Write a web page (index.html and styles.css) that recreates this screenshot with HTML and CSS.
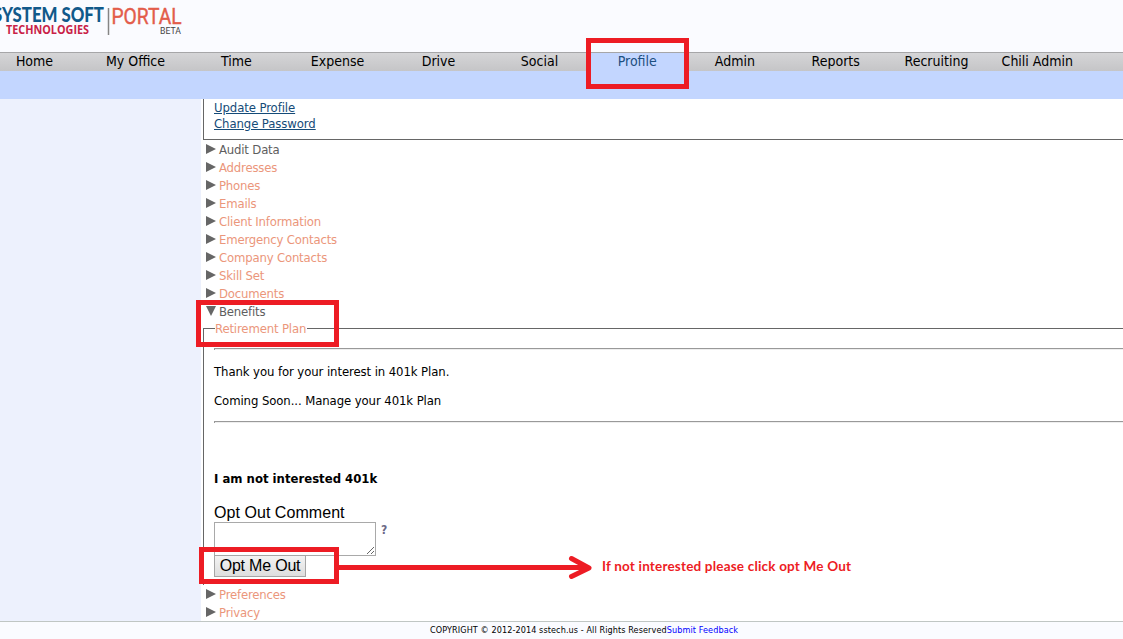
FILE: index.html
```html
<!DOCTYPE html>
<html lang="en">
<head>
<meta charset="utf-8">
<title>System Soft Portal - Profile</title>
<link rel="stylesheet" href="styles.css">
</head>
<body>
<header class="header">
  <svg class="logo" width="190" height="52" viewBox="0 0 190 52">
    <g class="logo-brand">
      <text x="-7" y="22.3" textLength="111" lengthAdjust="spacingAndGlyphs" class="brand-name">SYSTEM SOFT</text>
      <text x="6" y="34" textLength="83" lengthAdjust="spacingAndGlyphs" class="brand-sub">TECHNOLOGIES</text>
    </g>
    <path d="M108.500 8v27" stroke="#858585" stroke-width="1.5"/>
    <text x="111.500" y="23.800" textLength="70" lengthAdjust="spacingAndGlyphs" class="portal">PORTAL</text>
    <text x="160" y="33.800" textLength="21" lengthAdjust="spacingAndGlyphs" class="beta">BETA</text>
  </svg>
</header>
<nav class="nav">
  <a>Home</a><a>My Office</a><a>Time</a><a>Expense</a><a>Drive</a><a>Social</a><a class="active">Profile</a><a>Admin</a><a>Reports</a><a>Recruiting</a><a>Chili Admin</a>
</nav>
<div class="subnav"></div>
<div class="body">
  <aside class="sidebar"></aside>
  <main class="content">
    <section class="account">
      <a>Update Profile</a>
      <a>Change Password</a>
    </section>
    <ul class="sections">
      <li class="visited"><i class="tri"></i><span>Audit Data</span></li>
      <li><i class="tri"></i><span>Addresses</span></li>
      <li><i class="tri"></i><span>Phones</span></li>
      <li><i class="tri"></i><span>Emails</span></li>
      <li><i class="tri"></i><span>Client Information</span></li>
      <li><i class="tri"></i><span>Emergency Contacts</span></li>
      <li><i class="tri"></i><span>Company Contacts</span></li>
      <li><i class="tri"></i><span>Skill Set</span></li>
      <li><i class="tri"></i><span>Documents</span></li>
      <li class="visited"><i class="tri open"></i><span>Benefits</span></li>
    </ul>
    <section class="plan">
      <div class="legend"><span>Retirement Plan</span></div>
      <div class="plan-body">
        <hr>
        <p class="thanks">Thank you for your interest in 401k Plan.</p>
        <p class="soon">Coming Soon... Manage your 401k Plan</p>
        <hr>
        <h4>I am not interested 401k</h4>
        <label for="comment">Opt Out Comment</label>
        <div class="field"><textarea id="comment"></textarea><b class="help">?</b></div>
        <button>Opt Me Out</button>
      </div>
    </section>
    <ul class="sections">
      <li><i class="tri"></i><span>Preferences</span></li>
      <li><i class="tri"></i><span>Privacy</span></li>
    </ul>
  </main>
</div>
<footer class="footer"><span>COPYRIGHT © 2012-2014 sstech.us - All Rights Reserved</span><a>Submit Feedback</a></footer>
<svg class="notes" width="1123" height="639" viewBox="0 0 1123 639">
  <g fill="none" stroke="#ed1c24" stroke-width="5">
    <path d="M588.5 40.5h98v46h-98z"/>
    <path d="M198.500 302.500h138v42h-138z"/>
    <path d="M201.500 549.500h135v32h-135z"/>
    <path d="M339 567.500h248"/>
    <path d="M571.500 558.500l17.500 9.500-17.500 8.500" stroke-linecap="round" stroke-linejoin="round"/>
  </g>
  <text x="602" y="571" textLength="249" class="note">If not interested please click opt Me Out</text>
</svg>
</body>
</html>
```
FILE: styles.css
```css
* { box-sizing: border-box; }
body { margin: 0; width: 1123px; height: 639px; overflow: hidden; position: relative; background: #fff; color: #000; font: 13px/16px "DejaVu Sans Condensed", "DejaVu Sans", sans-serif; letter-spacing: -0.09px; }
.header { height: 52px; background: #fafbff; }
.logo { display: block; letter-spacing: 0; }
.brand-name { font: 900 20px Lato, sans-serif; fill: #11598a; }
.brand-sub { font: bold 11.5px "Open Sans", sans-serif; fill: #c91f48; }
.portal { font: 21.5px Roboto, sans-serif; fill: #e35d4b; stroke: #e35d4b; stroke-width: .4px; }
.beta { font: 9px Roboto, sans-serif; fill: #444; }
.nav { display: grid; grid-template-columns: repeat(6, 101px) 94.5px repeat(4, 100.8px); height: 19px; background: linear-gradient(#d5d5d7, #c5c5c7); border-top: 1px solid #a6a6a8; letter-spacing: 0; }
.nav a { margin-left: -16px; margin-right: 16px; text-align: center; font-size: 14px; line-height: 17px; height: 18px; white-space: nowrap; }
.nav .active { background: #c3d6ff; color: #1d4f80; }
.subnav { height: 28px; background: #c3d6ff; }
.body { display: flex; height: 522px; }
.sidebar { width: 201px; background: #edf1fd; }
.content { flex: 1; padding-left: 2px; }
.account { height: 41px; padding: 1px 0 0 10px; border-left: 1px solid #666; border-bottom: 1px solid #666; }
.account a { display: block; width: max-content; color: #154b78; text-decoration: underline; }
.sections { list-style: none; margin: 0; padding: 0 0 0 3px; letter-spacing: -0.18px; }
.sections li { display: flex; align-items: center; height: 18px; color: #eb967b; }
.sections span { padding-top: 2px; }
.sections .visited { color: #5e5e5e; }
.tri { width: 13px; height: 10px; }
.tri::before { content: ""; display: block; width: 10px; height: 10px; background: #666; clip-path: polygon(0 0, 100% 50%, 0 100%); }
.tri.open::before { width: 10px; height: 10px; clip-path: polygon(0 0, 100% 0, 50% 100%); }
.legend { display: flex; align-items: flex-start; height: 16px; color: #eb967b; line-height: 17px; letter-spacing: -0.15px; }
.legend::before, .legend::after { content: ""; height: 8px; margin-top: 8px; border-top: 1px solid #666; }
.legend::before { width: 11px; border-left: 1px solid #666; }
.legend::after { flex: 1; }
.legend span { padding: 0 1px 0 0; }
.plan { height: 265px; }
.plan-body { height: 249px; border-left: 1px solid #666; padding: 12px 0 0 10px; }
hr { margin: 0; height: 2px; border: 0; border-top: 1px solid #999; border-left: 1px solid #999; background: #eee; }
p { margin: 0; }
.thanks { padding-top: 14px; }
.soon { padding: 13px 0 12px; }
h4 { margin: 0; padding: 48px 0 0; font-size: 13px; line-height: 16px; letter-spacing: 0; }
label { display: block; margin-top: 17px; font: 16px/18px "Liberation Sans", sans-serif; letter-spacing: .05px; }
.field { display: flex; height: 33px; }
textarea { width: 162px; height: 34px; border: 1px solid #a9a9a9; border-radius: 0; padding: 2px; }
.help { margin-left: 5px; color: #6b6886; font-size: 12px; line-height: 16px; }
button { display: block; width: 92px; height: 22px; padding: 0; border: 1px solid #a6a6a6; border-radius: 0; background: linear-gradient(#f3f3f3, #dedede); font: 16px/18px "Liberation Sans", sans-serif; letter-spacing: -.2px; color: #000; position: relative; }
.footer { display: flex; height: 18px; padding-left: 430px; border-top: 1px solid #c0c6c4; background: #fafbff; font-size: 9px; line-height: 16px; white-space: nowrap; letter-spacing: .1px; }
.footer a { color: #00f; }
.notes { position: absolute; left: 0; top: 0; pointer-events: none; }
.note { font: bold 13.5px Lato, sans-serif; fill: #ed1c24; letter-spacing: 0; }
```
